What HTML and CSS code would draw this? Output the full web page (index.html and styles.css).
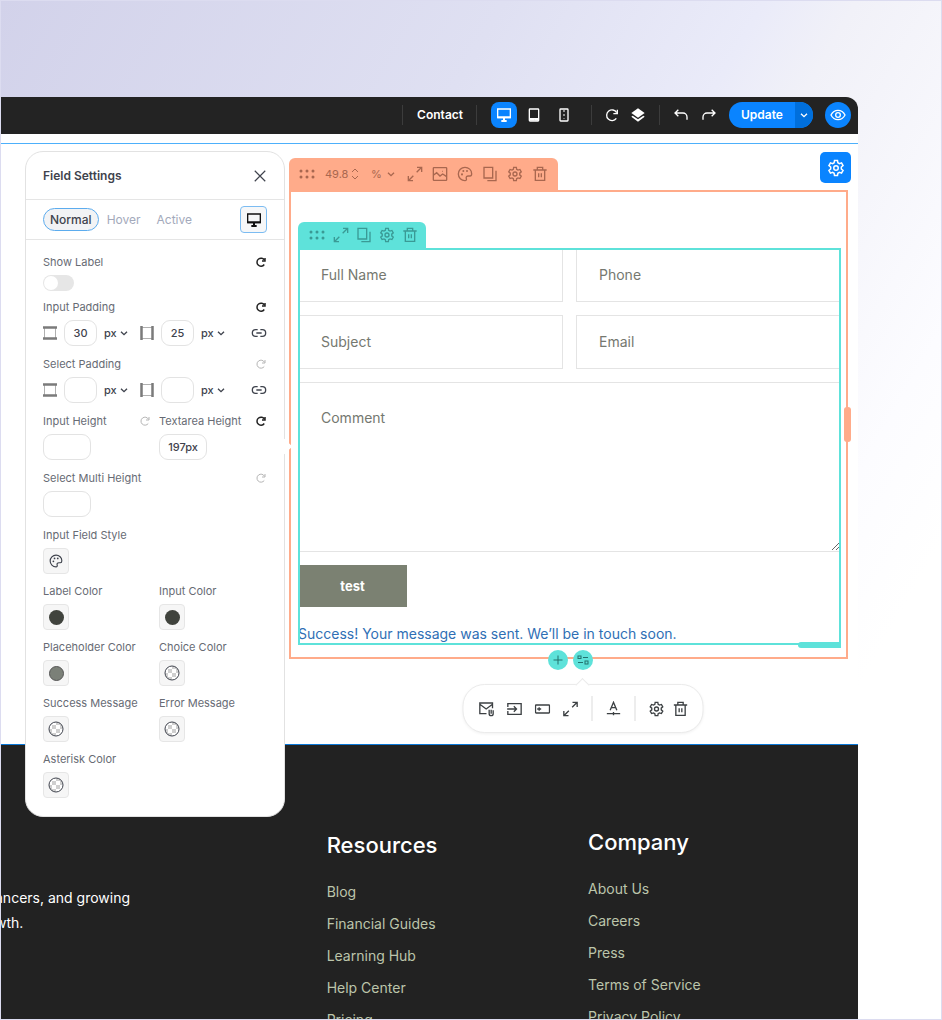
FILE: index.html
```html
<!DOCTYPE html>
<html lang="en">
<head>
  <meta charset="UTF-8">
  <meta name="viewport" content="width=device-width, initial-scale=1.0">
  <title>Contact - Page Editor</title>
  <link rel="stylesheet" href="styles.css">
</head>
<body>
  <!-- icon sprite -->
  <svg class="sprite" aria-hidden="true">
    <symbol id="i-desktop" viewBox="0 0 24 24"><path d="M2.500 3h19v13h-19z"/><path d="M2 15.500h20M12 16v5M8 21h8" stroke-width="3"/></symbol>
    <symbol id="i-tablet" viewBox="0 0 24 24"><rect x="5" y="3" width="14" height="18" rx="1"/><path d="M5 18.500h14" stroke-width="4"/><path d="M12 19h.1" class="dark"/></symbol>
    <symbol id="i-phone" viewBox="0 0 24 24"><rect x="6" y="3" width="12" height="18" rx="1"/><path d="M11 6h2M12 17v.5M12 11v2"/></symbol>
    <symbol id="i-reload" viewBox="0 0 24 24"><path d="M18.500 17A8 8 0 1 1 19 8.500"/><path d="M20 4v6h-6"/></symbol>
    <symbol id="i-layers" viewBox="0 0 24 24"><path class="solid" d="M12 2l10 7-10 7L2 9z"/><path class="solid" d="M4 13l8 5.500 8-5.500 2 1.500L12 22 2 14.500z"/></symbol>
    <symbol id="i-undo" viewBox="0 0 24 24"><path d="M8 4L3 9l5 5M3 9h12a6 6 0 0 1 6 6v4"/></symbol>
    <symbol id="i-redo" viewBox="0 0 24 24"><path d="M16 4l5 5-5 5M21 9H9a6 6 0 0 0-6 6v4"/></symbol>
    <symbol id="i-eye" viewBox="0 0 24 24"><path d="M1.500 12C4 7 7.500 5 12 5s8 2 10.500 7c-2.500 5-6 7-10.500 7s-8-2-10.500-7z"/><circle cx="12" cy="12" r="3.500"/></symbol>
    <symbol id="i-down" viewBox="0 0 24 24"><path d="M3 8l9 9 9-9"/></symbol>
    <symbol id="i-updown" viewBox="0 0 14 24"><path d="M1 8l6-6 6 6M1 16l6 6 6-6"/></symbol>
    <symbol id="i-close" viewBox="0 0 24 24"><path d="M3 3l18 18M21 3L3 21"/></symbol>
    <symbol id="i-gear" viewBox="0 0 24 24"><path d="M9.500 5L10 2h4l.5 3 2 1.200 2.900-1 2 3.500-2.300 2v2.600l2.300 2-2 3.500-2.900-1-2 1.200-.5 3h-4l-.5-3-2-1.200-2.900 1-2-3.500 2.300-2v-2.600l-2.300-2 2-3.500 2.900 1z"/><circle cx="12" cy="12" r="3"/></symbol>
    <symbol id="i-trash" viewBox="0 0 24 24"><path d="M2 6h20M5 6v15.500h14V6M8 6V2h8v4M10 11v6M14 11v6"/></symbol>
    <symbol id="i-copy" viewBox="0 0 24 24"><path d="M3 2h13v16H3z"/><path d="M8 22h13V7"/></symbol>
    <symbol id="i-expand" viewBox="0 0 24 24"><path d="M15 2h7v7M22 2l-7.500 7.500M9 22H2v-7M2 22l7.500-7.500"/></symbol>
    <symbol id="i-image" viewBox="0 0 24 24"><rect x="2" y="2.500" width="20" height="19" rx="1"/><path d="M2 14l5-4 5 5 4-3 6 4M15 8h1"/></symbol>
    <symbol id="i-palette" viewBox="0 0 24 24"><path d="M12 2a10 10 0 1 0 0 20c2 0 2.500-1.500 2-3-.8-2.500.5-4 3-4h2.500c1.800 0 2.500-1.500 2.500-3.500C22 6 17.500 2 12 2z"/><path d="M7.500 12.500v.1M9.500 7.500v.1M15 7.500v.1" stroke-width="3" stroke-linecap="round"/></symbol>
    <symbol id="i-dots" viewBox="0 0 18 12"><g class="solid"><circle cx="3" cy="3" r="1.500"/><circle cx="9" cy="3" r="1.500"/><circle cx="15" cy="3" r="1.500"/><circle cx="3" cy="9" r="1.500"/><circle cx="9" cy="9" r="1.500"/><circle cx="15" cy="9" r="1.500"/></g></symbol>
    <symbol id="i-vpad" viewBox="0 0 14 14"><path d="M0 1.500h14M0 12.500h14" stroke-width="2.500"/><path d="M1.500 2v10M12.500 2v10" stroke-width="1" opacity=".6"/></symbol>
    <symbol id="i-hpad" viewBox="0 0 14 14"><path d="M1.500 0v14M12.500 0v14" stroke-width="2.500"/><path d="M2 1.500h10M2 12.500h10" stroke-width="1" opacity=".6"/></symbol>
    <symbol id="i-link" viewBox="0 0 24 24"><path d="M10 7H7a5 5 0 0 0 0 10h3M14 7h3a5 5 0 0 1 0 10h-3M8 12h8"/></symbol>
    <symbol id="i-mail" viewBox="0 0 24 24"><path d="M12 19H2V3h19v8M2 5l9.500 7L21 5"/><path d="M16 13v6a3 3 0 0 0 6 0v-5M19 13v6"/></symbol>
    <symbol id="i-enter" viewBox="0 0 24 24"><path d="M2 9V4h20v16H2v-5M1 12h13M11 8l4 4-4 4"/></symbol>
    <symbol id="i-field" viewBox="0 0 24 24"><rect x="1.500" y="6" width="21" height="12" rx="1"/><path d="M4 12h6M7 9.500v5"/></symbol>
    <symbol id="i-text" viewBox="0 0 24 24"><path d="M7 14l5-12 5 12M9 10h6M2 19h20M12 16.500v5"/></symbol>
    <symbol id="i-plus" viewBox="0 0 24 24"><path d="M12 3v18M3 12h18"/></symbol>
    <symbol id="i-fields" viewBox="0 0 24 24"><rect x="2" y="4" width="6" height="5"/><path d="M12 7h10M2 17h10"/><rect x="16" y="14" width="6" height="6"/></symbol>
    <symbol id="i-clear" viewBox="0 0 16 16"><circle cx="8" cy="8" r="7" fill="#fff" stroke="none"/><path d="M4 4h4v4H4zM8 8h4v4H8zM8 1.500h4V4H8zM12 4h2.200v4H12zM1.500 8H4v4H1.500zM4 12h4v2.500H4z" fill="#cfcfcf" stroke="none"/><circle cx="8" cy="8" r="7"/></symbol>
  </svg>

  <div class="app">
    <header class="topbar">
      <span class="sep"></span>
      <a class="page-name" href="#">Contact</a>
      <span class="sep"></span>
      <div class="tools devices">
        <button class="tool active" aria-label="Desktop"><svg class="icon"><use href="#i-desktop"/></svg></button>
        <button class="tool" aria-label="Tablet"><svg class="icon"><use href="#i-tablet"/></svg></button>
        <button class="tool" aria-label="Phone"><svg class="icon"><use href="#i-phone"/></svg></button>
      </div>
      <span class="sep"></span>
      <div class="tools">
        <button class="tool" aria-label="Reload"><svg class="icon"><use href="#i-reload"/></svg></button>
        <button class="tool" aria-label="Layers"><svg class="icon"><use href="#i-layers"/></svg></button>
      </div>
      <span class="sep"></span>
      <div class="tools history">
        <button class="tool" aria-label="Undo"><svg class="icon"><use href="#i-undo"/></svg></button>
        <button class="tool" aria-label="Redo"><svg class="icon"><use href="#i-redo"/></svg></button>
      </div>
      <div class="update">
        <button class="update-main">Update</button>
        <button class="update-more" aria-label="More options"><svg class="icon small"><use href="#i-down"/></svg></button>
      </div>
      <button class="preview" aria-label="Preview"><svg class="icon"><use href="#i-eye"/></svg></button>
    </header>

    <main class="canvas">
      <section class="section">
        <button class="section-settings" aria-label="Section settings"><svg class="icon large"><use href="#i-gear"/></svg></button>

        <div class="column">
          <div class="bar column-bar">
            <svg class="icon dots"><use href="#i-dots"/></svg>
            <label class="size"><input type="text" value="49.8" aria-label="Column width"><svg class="icon updown"><use href="#i-updown"/></svg></label>
            <label class="select"><select aria-label="Width unit"><option>%</option></select><svg class="icon tiny"><use href="#i-down"/></svg></label>
            <button aria-label="Expand column"><svg class="icon"><use href="#i-expand"/></svg></button>
            <button aria-label="Background"><svg class="icon"><use href="#i-image"/></svg></button>
            <button aria-label="Column style"><svg class="icon"><use href="#i-palette"/></svg></button>
            <button aria-label="Duplicate column"><svg class="icon"><use href="#i-copy"/></svg></button>
            <button aria-label="Column settings"><svg class="icon"><use href="#i-gear"/></svg></button>
            <button aria-label="Delete column"><svg class="icon"><use href="#i-trash"/></svg></button>
          </div>
          <div class="column-frame">
            <div class="bar element-bar">
              <svg class="icon dots"><use href="#i-dots"/></svg>
              <button aria-label="Expand form"><svg class="icon"><use href="#i-expand"/></svg></button>
              <button aria-label="Duplicate form"><svg class="icon"><use href="#i-copy"/></svg></button>
              <button aria-label="Form settings"><svg class="icon"><use href="#i-gear"/></svg></button>
              <button aria-label="Delete form"><svg class="icon"><use href="#i-trash"/></svg></button>
            </div>
            <form class="contact-form">
              <input type="text" placeholder="Full Name" aria-label="Full Name">
              <input type="tel" placeholder="Phone" aria-label="Phone">
              <input type="text" placeholder="Subject" aria-label="Subject">
              <input type="email" placeholder="Email" aria-label="Email">
              <textarea placeholder="Comment" aria-label="Comment"></textarea>
              <button type="button" class="submit">test</button>
              <p class="success">Success! Your message was sent. We’ll be in touch soon.</p>
            </form>
          </div>

          <div class="add-row">
            <button class="round" aria-label="Add element"><svg class="icon"><use href="#i-plus"/></svg></button>
            <div class="round-wrap">
              <button class="round" aria-label="Form fields"><svg class="icon"><use href="#i-fields"/></svg></button>
              <div class="popover">
                <div class="group">
                  <button aria-label="Mail"><svg class="icon"><use href="#i-mail"/></svg></button>
                  <button aria-label="Submit action"><svg class="icon"><use href="#i-enter"/></svg></button>
                  <button aria-label="Field"><svg class="icon"><use href="#i-field"/></svg></button>
                  <button aria-label="Spacing"><svg class="icon"><use href="#i-expand"/></svg></button>
                </div>
                <span class="divider"></span>
                <button aria-label="Typography"><svg class="icon"><use href="#i-text"/></svg></button>
                <span class="divider"></span>
                <div class="group tight">
                  <button aria-label="Settings"><svg class="icon"><use href="#i-gear"/></svg></button>
                  <button aria-label="Delete"><svg class="icon"><use href="#i-trash"/></svg></button>
                </div>
              </div>
            </div>
          </div>
        </div>

        <aside class="panel">
          <div class="panel-head">
            <h2>Field Settings</h2>
            <button aria-label="Close"><svg class="icon"><use href="#i-close"/></svg></button>
          </div>
          <div class="panel-tabs">
            <button class="tab active">Normal</button>
            <button class="tab">Hover</button>
            <button class="tab">Active</button>
            <button class="device" aria-label="Desktop"><svg class="icon"><use href="#i-desktop"/></svg></button>
          </div>
          <div class="panel-body">
            <div class="field">
              <div class="label-row"><label for="show-label">Show Label</label><button aria-label="Reset"><svg class="icon reset"><use href="#i-reload"/></svg></button></div>
              <input type="checkbox" class="toggle" id="show-label">
            </div>

            <div class="field">
              <div class="label-row"><label for="input-padding">Input Padding</label><button aria-label="Reset"><svg class="icon reset"><use href="#i-reload"/></svg></button></div>
              <div class="padding-row">
                <svg class="icon pad"><use href="#i-vpad"/></svg>
                <input type="text" id="input-padding" value="30">
                <label class="select"><select aria-label="Vertical unit"><option>px</option></select><svg class="icon tiny"><use href="#i-down"/></svg></label>
                <svg class="icon pad second"><use href="#i-hpad"/></svg>
                <input type="text" value="25" aria-label="Horizontal input padding">
                <label class="select"><select aria-label="Horizontal unit"><option>px</option></select><svg class="icon tiny"><use href="#i-down"/></svg></label>
                <button class="link" aria-label="Link values"><svg class="icon"><use href="#i-link"/></svg></button>
              </div>
            </div>

            <div class="field">
              <div class="label-row"><label for="select-padding">Select Padding</label><button aria-label="Reset"><svg class="icon reset off"><use href="#i-reload"/></svg></button></div>
              <div class="padding-row">
                <svg class="icon pad"><use href="#i-vpad"/></svg>
                <input type="text" id="select-padding">
                <label class="select"><select aria-label="Vertical unit"><option>px</option></select><svg class="icon tiny"><use href="#i-down"/></svg></label>
                <svg class="icon pad second"><use href="#i-hpad"/></svg>
                <input type="text" aria-label="Horizontal select padding">
                <label class="select"><select aria-label="Horizontal unit"><option>px</option></select><svg class="icon tiny"><use href="#i-down"/></svg></label>
                <button class="link" aria-label="Link values"><svg class="icon"><use href="#i-link"/></svg></button>
              </div>
            </div>

            <div class="two-cols">
              <div class="field">
                <div class="label-row"><label for="input-height">Input Height</label><button aria-label="Reset"><svg class="icon reset off"><use href="#i-reload"/></svg></button></div>
                <input type="text" class="height" id="input-height">
              </div>
              <div class="field">
                <div class="label-row"><label for="textarea-height">Textarea Height</label><button aria-label="Reset"><svg class="icon reset"><use href="#i-reload"/></svg></button></div>
                <input type="text" class="height" id="textarea-height" value="197px">
              </div>
            </div>

            <div class="field">
              <div class="label-row"><label for="multi-height">Select Multi Height</label><button aria-label="Reset"><svg class="icon reset off"><use href="#i-reload"/></svg></button></div>
              <input type="text" class="height" id="multi-height">
            </div>

            <div class="two-cols">
              <div class="field wide">
                <div class="label-row"><label for="field-style">Input Field Style</label></div>
                <button class="swatch" id="field-style"><svg class="icon"><use href="#i-palette"/></svg></button>
              </div>
              <div class="field">
                <div class="label-row"><label for="c-label">Label Color</label></div>
                <button class="swatch" id="c-label"><span class="color"></span></button>
              </div>
              <div class="field">
                <div class="label-row"><label for="c-input">Input Color</label></div>
                <button class="swatch" id="c-input"><span class="color"></span></button>
              </div>
              <div class="field">
                <div class="label-row"><label for="c-placeholder">Placeholder Color</label></div>
                <button class="swatch" id="c-placeholder"><span class="color soft"></span></button>
              </div>
              <div class="field">
                <div class="label-row"><label for="c-choice">Choice Color</label></div>
                <button class="swatch" id="c-choice"><svg class="icon clear"><use href="#i-clear"/></svg></button>
              </div>
              <div class="field">
                <div class="label-row"><label for="c-success">Success Message</label></div>
                <button class="swatch" id="c-success"><svg class="icon clear"><use href="#i-clear"/></svg></button>
              </div>
              <div class="field">
                <div class="label-row"><label for="c-error">Error Message</label></div>
                <button class="swatch" id="c-error"><svg class="icon clear"><use href="#i-clear"/></svg></button>
              </div>
              <div class="field">
                <div class="label-row"><label for="c-asterisk">Asterisk Color</label></div>
                <button class="swatch" id="c-asterisk"><svg class="icon clear"><use href="#i-clear"/></svg></button>
              </div>
            </div>
          </div>
        </aside>
      </section>

      <footer class="footer">
        <p class="about">ancers, and growing<br>wth.</p>
        <nav class="resources">
          <h3>Resources</h3>
          <a href="#">Blog</a>
          <a href="#">Financial Guides</a>
          <a href="#">Learning Hub</a>
          <a href="#">Help Center</a>
          <a href="#">Pricing</a>
        </nav>
        <nav>
          <h3>Company</h3>
          <a href="#">About Us</a>
          <a href="#">Careers</a>
          <a href="#">Press</a>
          <a href="#">Terms of Service</a>
          <a href="#">Privacy Policy</a>
        </nav>
      </footer>
    </main>
  </div>
</body>
</html>
```

FILE: styles.css
```css
* {
  box-sizing: border-box;
}

body {
  margin: 0;
  height: 100vh;
  overflow: hidden;
  border: 1px solid #dcdcf0;
  background: linear-gradient(120deg, #d2d2ea 0%, #dfe0f2 33%, #eaebf9 50%, #f1f1f8 56%, #fcfcff 74%, #fff 82%);
  font-family: Inter, "Liberation Sans", sans-serif;
  font-size: 11px;
}

button,
input,
select,
textarea {
  font-family: inherit;
  font-size: inherit;
  color: inherit;
}

button {
  display: flex;
  align-items: center;
  justify-content: center;
  padding: 0;
  border: none;
  background: none;
  cursor: pointer;
}

a {
  text-decoration: none;
}

.sprite {
  position: absolute;
  width: 0;
  height: 0;
}

.icon {
  display: block;
  flex: none;
  width: 16px;
  height: 16px;
  fill: none;
  stroke: currentColor;
  stroke-width: 2;
}

.icon.small {
  width: 8px;
  height: 8px;
  stroke-width: 4;
}

.icon.tiny {
  width: 8px;
  height: 8px;
  stroke-width: 4;
}

.icon.large {
  width: 18px;
  height: 18px;
}

.solid {
  fill: currentColor;
  stroke: none;
}

.dark {
  stroke: #232323;
}

.app {
  margin: 96px 83px 0 0;
}

/* top bar */
.topbar {
  display: flex;
  align-items: center;
  justify-content: flex-end;
  height: 37px;
  padding: 0 7px 2px 0;
  background: #232323;
  border-top-right-radius: 12px;
  color: #fff;
}

.sep {
  width: 1px;
  height: 20px;
  background: #3c3c3c;
}

.page-name {
  margin: 0 13px 0 14px;
  color: #fff;
  font-size: 12px;
  font-weight: 600;
}

.tools {
  display: flex;
  margin: 0 8px 0 7px;
}

.devices {
  gap: 4px;
  margin: 0 14px;
}

.history {
  gap: 2px;
  margin: 0 7px 0 8px;
}

.tool {
  width: 26px;
  height: 26px;
  border-radius: 8px;
}

.tool.active,
.section-settings {
  background: #0a84ff;
}

.update {
  display: flex;
  height: 26px;
  margin-right: 12px;
  border-radius: 13px;
  overflow: hidden;
  background: #0a84ff;
}

.update-main {
  width: 66px;
  font-size: 12px;
  font-weight: 600;
}

.update-more {
  width: 18px;
  background: #006fdc;
}

.preview {
  width: 26px;
  height: 26px;
  border-radius: 50%;
  background: #0a84ff;
}

/* canvas */
.canvas {
  padding-top: 9px;
  background: #fff;
}

.section {
  position: relative;
  padding: 14px 10px 85px 288px;
  border-top: 1px solid #4db0fb;
  border-bottom: 1px solid #0a78d8;
}

.section-settings {
  position: absolute;
  top: 8px;
  right: 7px;
  width: 31px;
  height: 31px;
  border-radius: 5px;
  color: #fff;
}

.bar {
  display: flex;
  align-items: center;
  width: max-content;
  border-radius: 6px 6px 0 0;
}

.dots {
  width: 18px;
  height: 12px;
}

.column {
  position: relative;
}

.column-bar {
  gap: 9px;
  height: 32px;
  padding: 0 10px 0 9px;
  background: #ffab8a;
  color: #a9674f;
}

.size {
  display: flex;
  align-items: center;
  gap: 1px;
}

.size input {
  width: 25px;
  padding: 0;
  border: none;
  background: none;
}

.updown {
  width: 8px;
  height: 12px;
}

.select {
  display: flex;
  align-items: center;
  gap: 3px;
}

.select select {
  appearance: none;
  padding: 0;
  border: none;
  background: none;
}

.column-bar .select {
  gap: 5px;
  margin: 0 3px;
}

.column-frame {
  position: relative;
  padding: 30px 5px 12px 7px;
  border: 2px solid #ffab8a;
}

/* resize handle of the column */
.column-frame::after {
  content: "";
  position: absolute;
  top: 215px;
  right: -5px;
  width: 7px;
  height: 35px;
  border-radius: 3px;
  background: #ffab8a;
}

.element-bar {
  gap: 7px;
  height: 26px;
  padding: 0 8px 0 10px;
  background: #5ee2da;
  color: #3a9a95;
}

.contact-form {
  position: relative;
  display: grid;
  grid-template-columns: 1fr 1fr;
  gap: 13px;
  color: #2f6fb5;
  font-size: 14px;
}

.contact-form::before {
  content: "";
  position: absolute;
  inset: 0;
  border: 2px solid #5ee2da;
  pointer-events: none;
}

.contact-form::after {
  content: "";
  position: absolute;
  right: 0;
  bottom: -3px;
  width: 43px;
  height: 6px;
  border-radius: 3px 0 0 3px;
  background: #5ee2da;
}

.contact-form input,
.contact-form textarea {
  width: 100%;
  padding: 0 22px 2px;
  border: 1px solid #e4e4e4;
  background: #fff;
}

.contact-form input {
  height: 54px;
}

.contact-form textarea {
  grid-column: 1 / -1;
  height: 170px;
  padding-top: 26px;
}

.contact-form ::placeholder {
  color: #757870;
}

.submit {
  width: 109px;
  height: 42px;
  background: #7b8172;
  color: #fff;
  font-size: 13px;
  font-weight: 700;
}

.success {
  grid-column: 1 / -1;
  margin: 0;
  padding-top: 2px;
  line-height: 23px;
}

.add-row {
  display: flex;
  justify-content: center;
  gap: 5px;
  position: absolute;
  top: 100%;
  left: 3px;
  right: 0;
  margin-top: -9px;
}

.round {
  width: 20px;
  height: 20px;
  border-radius: 50%;
  background: #5ee2da;
  color: #23706d;
}

.round .icon {
  width: 12px;
  height: 12px;
}

.round-wrap {
  position: relative;
}

.popover {
  position: absolute;
  top: 34px;
  left: 50%;
  transform: translateX(-50%);
  display: flex;
  align-items: center;
  gap: 13px;
  height: 49px;
  padding: 0 14px 0 15px;
  border: 1px solid #ebebeb;
  border-radius: 22px;
  background: #fff;
  box-shadow: 0 1px 3px rgba(0, 0, 0, 0.06);
  color: #3c4043;
}

.popover::before {
  content: "";
  position: absolute;
  top: -5px;
  left: 50%;
  width: 9px;
  height: 9px;
  margin-left: -5px;
  border: 1px solid #ebebeb;
  border-width: 1px 0 0 1px;
  background: #fff;
  transform: rotate(45deg);
}

.group {
  display: flex;
  gap: 12px;
}

.group.tight {
  gap: 8px;
}

.divider {
  width: 1px;
  height: 25px;
  background: #dcdcdc;
}

/* settings panel */
.panel {
  position: absolute;
  top: 7px;
  left: 24px;
  width: 260px;
  border: 1px solid #e2e2e2;
  border-radius: 18px;
  background: #fff;
  color: #3f434d;
}

.panel::after {
  content: "";
  position: absolute;
  top: 289px;
  right: -6px;
  width: 11px;
  height: 11px;
  background: #fff;
  transform: rotate(45deg);
}

.panel-head {
  display: flex;
  align-items: center;
  justify-content: space-between;
  height: 48px;
  padding: 0 17px;
  border-bottom: 1px solid #e5e5e5;
}

.panel-head h2 {
  margin: 0;
  font-size: 12px;
  font-weight: 600;
}

.panel-head .icon {
  width: 14px;
  height: 14px;
}

.panel-tabs {
  display: flex;
  align-items: center;
  height: 40px;
  padding: 0 17px;
  border-bottom: 1px solid #e5e5e5;
}

.tab {
  height: 23px;
  padding: 0 8px;
  border-radius: 12px;
  color: #a3a9bb;
  font-size: 12px;
}

.tab.active {
  padding: 0 6px;
  border: 1px solid #5cacee;
  background: #f2f3f5;
  color: #3f434d;
  font-weight: 500;
}

.device {
  width: 27px;
  height: 27px;
  margin-left: auto;
  border: 1px solid #7cbcf2;
  border-radius: 4px;
  background: #f6f7f8;
  color: #111;
}

.panel-body {
  display: flex;
  flex-direction: column;
  gap: 10px;
  padding: 14px 17px 18px;
}

.field:first-child > .toggle {
  margin-bottom: -2px;
}

.label-row {
  display: flex;
  align-items: center;
  justify-content: space-between;
  height: 16px;
  margin-bottom: 5px;
  color: #676b74;
}

.reset {
  width: 12px;
  height: 12px;
  color: #222;
  stroke-width: 3;
}

.reset.off {
  color: #b5b5b5;
  stroke-width: 2;
}

.toggle {
  display: block;
  appearance: none;
  width: 31px;
  height: 16px;
  margin: 0;
  padding: 1px;
  border-radius: 8px;
  background: #e6e6e6;
}

.toggle::before {
  content: "";
  display: block;
  width: 14px;
  height: 14px;
  border-radius: 50%;
  background: #fff;
}

.padding-row {
  display: flex;
  align-items: center;
  gap: 7px;
  font-weight: 500;
}

.padding-row input,
.height {
  width: 33px;
  height: 26px;
  padding: 0;
  border: 1px solid #e3e3e3;
  border-radius: 9px;
  background: #fff;
  font-weight: 500;
  text-align: center;
}

.height {
  display: block;
  width: 48px;
}

.padding-row .select {
  width: 26px;
}

.padding-row select {
  font-weight: 500;
}

.pad {
  width: 14px;
  height: 14px;
  color: #7b7b7b;
}

.pad.second {
  margin-left: 3px;
}

.link {
  margin-left: auto;
}

.two-cols {
  display: grid;
  grid-template-columns: 1fr 1fr;
  gap: 9px 8px;
}

.wide {
  grid-column: 1 / -1;
}

.swatch {
  width: 26px;
  height: 26px;
  border: 1px solid #e6e6e6;
  border-radius: 4px;
  background: #f6f6f6;
}

.swatch .icon {
  width: 14px;
  height: 14px;
}

.swatch .clear {
  width: 16px;
  height: 16px;
  stroke-width: 1;
}

.color {
  width: 15px;
  height: 15px;
  border-radius: 50%;
  background: #40433d;
}

.color.soft {
  border: 1px solid #555;
  background: #7b8078;
}

/* footer of the edited page */
.footer {
  display: grid;
  grid-template-columns: 38% 30.5% 1fr;
  height: 320px;
  padding-top: 84px;
  background: #222;
  color: #fff;
  font-size: 14px;
}

.about {
  margin: 56px 0 0 -6px;
  line-height: 25px;
}

.footer h3 {
  margin: 0 0 18px;
  font-size: 22px;
  font-weight: 500;
  line-height: 26px;
}

.footer nav a {
  display: block;
  color: #bcc5ab;
  line-height: 32px;
}

.resources {
  padding-top: 3px;
}
```
